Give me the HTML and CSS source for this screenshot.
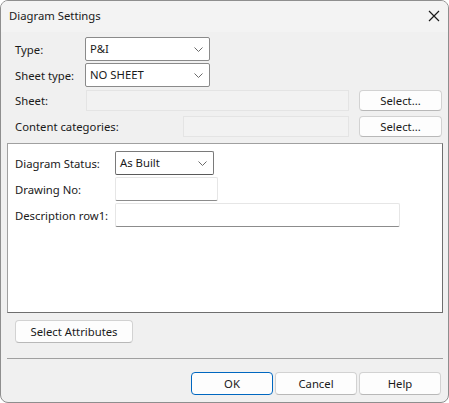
FILE: index.html
```html
<!DOCTYPE html>
<html lang="en">
<head>
    <meta charset="UTF-8">
    <title>Diagram Settings</title>
    <link rel="stylesheet" href="styles.css">
</head>
<body>
    <div class="window">
        <div class="titlebar">
            <span class="title">Diagram Settings</span>
            <svg class="close" width="12" height="12" viewBox="0 0 12 12">
                <path d="M1 1 L11 11 M11 1 L1 11" stroke="#1a1a1a" stroke-width="1.2" fill="none"/>
            </svg>
        </div>

        <div class="content">
            <div class="row row-type">
                <label class="lbl lbl-short">Type:</label>
                <div class="combo combo-top">
                    <span>P&amp;I</span>
                    <svg class="arrow" width="9" height="5" viewBox="0 0 9 5"><path d="M0.5 0.5 L4.5 4.5 L8.5 0.5" stroke="#6b6b6b" fill="none"/></svg>
                </div>
            </div>
            <div class="row row-sheettype">
                <label class="lbl lbl-short">Sheet type:</label>
                <div class="combo combo-top">
                    <span>NO SHEET</span>
                    <svg class="arrow" width="9" height="5" viewBox="0 0 9 5"><path d="M0.5 0.5 L4.5 4.5 L8.5 0.5" stroke="#6b6b6b" fill="none"/></svg>
                </div>
            </div>
            <div class="row row-sheet">
                <label class="lbl lbl-short">Sheet:</label>
                <div class="field-dis field-sheet"></div>
                <button class="btn btn-select">Select...</button>
            </div>
            <div class="row row-cat">
                <label class="lbl lbl-long">Content categories:</label>
                <div class="field-dis field-cat"></div>
                <button class="btn btn-select">Select...</button>
            </div>

            <div class="panel">
                <div class="prow">
                    <label class="plbl">Diagram Status:</label>
                    <div class="combo combo-status">
                        <span>As Built</span>
                        <svg class="arrow" width="9" height="5" viewBox="0 0 9 5"><path d="M0.5 0.5 L4.5 4.5 L8.5 0.5" stroke="#6b6b6b" fill="none"/></svg>
                    </div>
                </div>
                <div class="prow">
                    <label class="plbl">Drawing No:</label>
                    <div class="textbox tb-drawing"></div>
                </div>
                <div class="prow">
                    <label class="plbl">Description row1:</label>
                    <div class="textbox tb-desc"></div>
                </div>
            </div>

            <button class="btn btn-attr">Select Attributes</button>

            <div class="separator"></div>

            <div class="footer">
                <button class="btn btn-foot btn-ok">OK</button>
                <button class="btn btn-foot">Cancel</button>
                <button class="btn btn-foot">Help</button>
            </div>
        </div>
    </div>
</body>
</html>
```

FILE: styles.css
```css
*{
    padding: 0;
    margin: 0;
    box-sizing: border-box;
}

body{
    width: 449px;
    height: 403px;
    background: #ffffff;
    font-family: "Noto Sans", "Liberation Sans", sans-serif;
    font-size: 11.3px;
    color: #1a1a1a;
    overflow: hidden;
}

.window {
    width: 449px;
    height: 403px;
    border: 1px solid #8e8e8e;
    border-radius: 8px;
    background: #f0f0f0;
    overflow: hidden;
}

.titlebar {
    height: 31px;
    background: #f3f3f3;
    display: flex;
    align-items: center;
    justify-content: space-between;
    padding: 0 8px 0 8px;
}

.title {
    margin-top: -2px;
}

.close {
    margin-top: -2px;
}

.content {
    padding: 5px 6px 0 6px;
}

.row {
    display: flex;
    align-items: center;
}

.lbl {
    padding-left: 8px;
}

.lbl-short {
    width: 78px;
}

.lbl-long {
    width: 176px;
}

.row-type {
    height: 24px;
}

.row-sheettype {
    height: 24px;
    margin-top: 2px;
}

.row-sheet {
    height: 21px;
    margin-top: 3px;
}

.row-cat {
    height: 21px;
    margin-top: 5px;
}

.combo {
    height: 24px;
    background: #ffffff;
    border: 1px solid #8a8a8a;
    border-radius: 2px;
    display: flex;
    align-items: center;
    justify-content: space-between;
    padding: 0 6px 0 4px;
}

.combo-top {
    width: 125px;
}

.combo span {
    margin-top: -1px;
}

.arrow {
    margin-top: 1px;
}

.field-dis {
    height: 21px;
    background: #f2f2f2;
    border: 1px solid #e4e4e4;
}

.field-sheet {
    width: 263px;
    margin-left: 1px;
}

.field-cat {
    width: 166px;
}

.btn {
    font-family: inherit;
    font-size: 11.3px;
    color: #1a1a1a;
    background: #fdfdfd;
    border: 1px solid #d2d2d2;
    border-bottom-color: #b8b8b8;
    border-radius: 4px;
}

.btn-select {
    width: 83px;
    height: 21px;
    margin-left: 10px;
}

.panel {
    margin-top: 6px;
    width: 436px;
    height: 170px;
    background: #ffffff;
    border: 1px solid #6e6e6e;
    border-top-color: #a0a0a0;
    border-left-color: #a0a0a0;
    padding: 7px 0 0 7px;
}

.prow {
    display: flex;
    align-items: center;
    margin-bottom: 2px;
}

.plbl {
    width: 100px;
}

.combo-status {
    width: 99px;
    height: 24px;
    border-color: #7a7a7a;
    border-bottom-color: #5a5a5a;
}

.textbox {
    height: 24px;
    background: #ffffff;
    border: 1px solid #e6e6e6;
    border-bottom-color: #8c8c8c;
    border-radius: 2px;
}

.tb-drawing {
    width: 103px;
}

.tb-desc {
    width: 285px;
}

.btn-attr {
    display: block;
    width: 118px;
    height: 23px;
    margin: 7px 0 0 8px;
}

.separator {
    margin-top: 15px;
    width: 436px;
    border-top: 1px solid #a0a0a0;
}

.footer {
    display: flex;
    justify-content: flex-end;
    gap: 2px;
    margin-top: 13px;
    padding-right: 1px;
}

.btn-foot {
    width: 82px;
    height: 23px;
}

.btn-ok {
    border: 1px solid #0067c0;
}
```
